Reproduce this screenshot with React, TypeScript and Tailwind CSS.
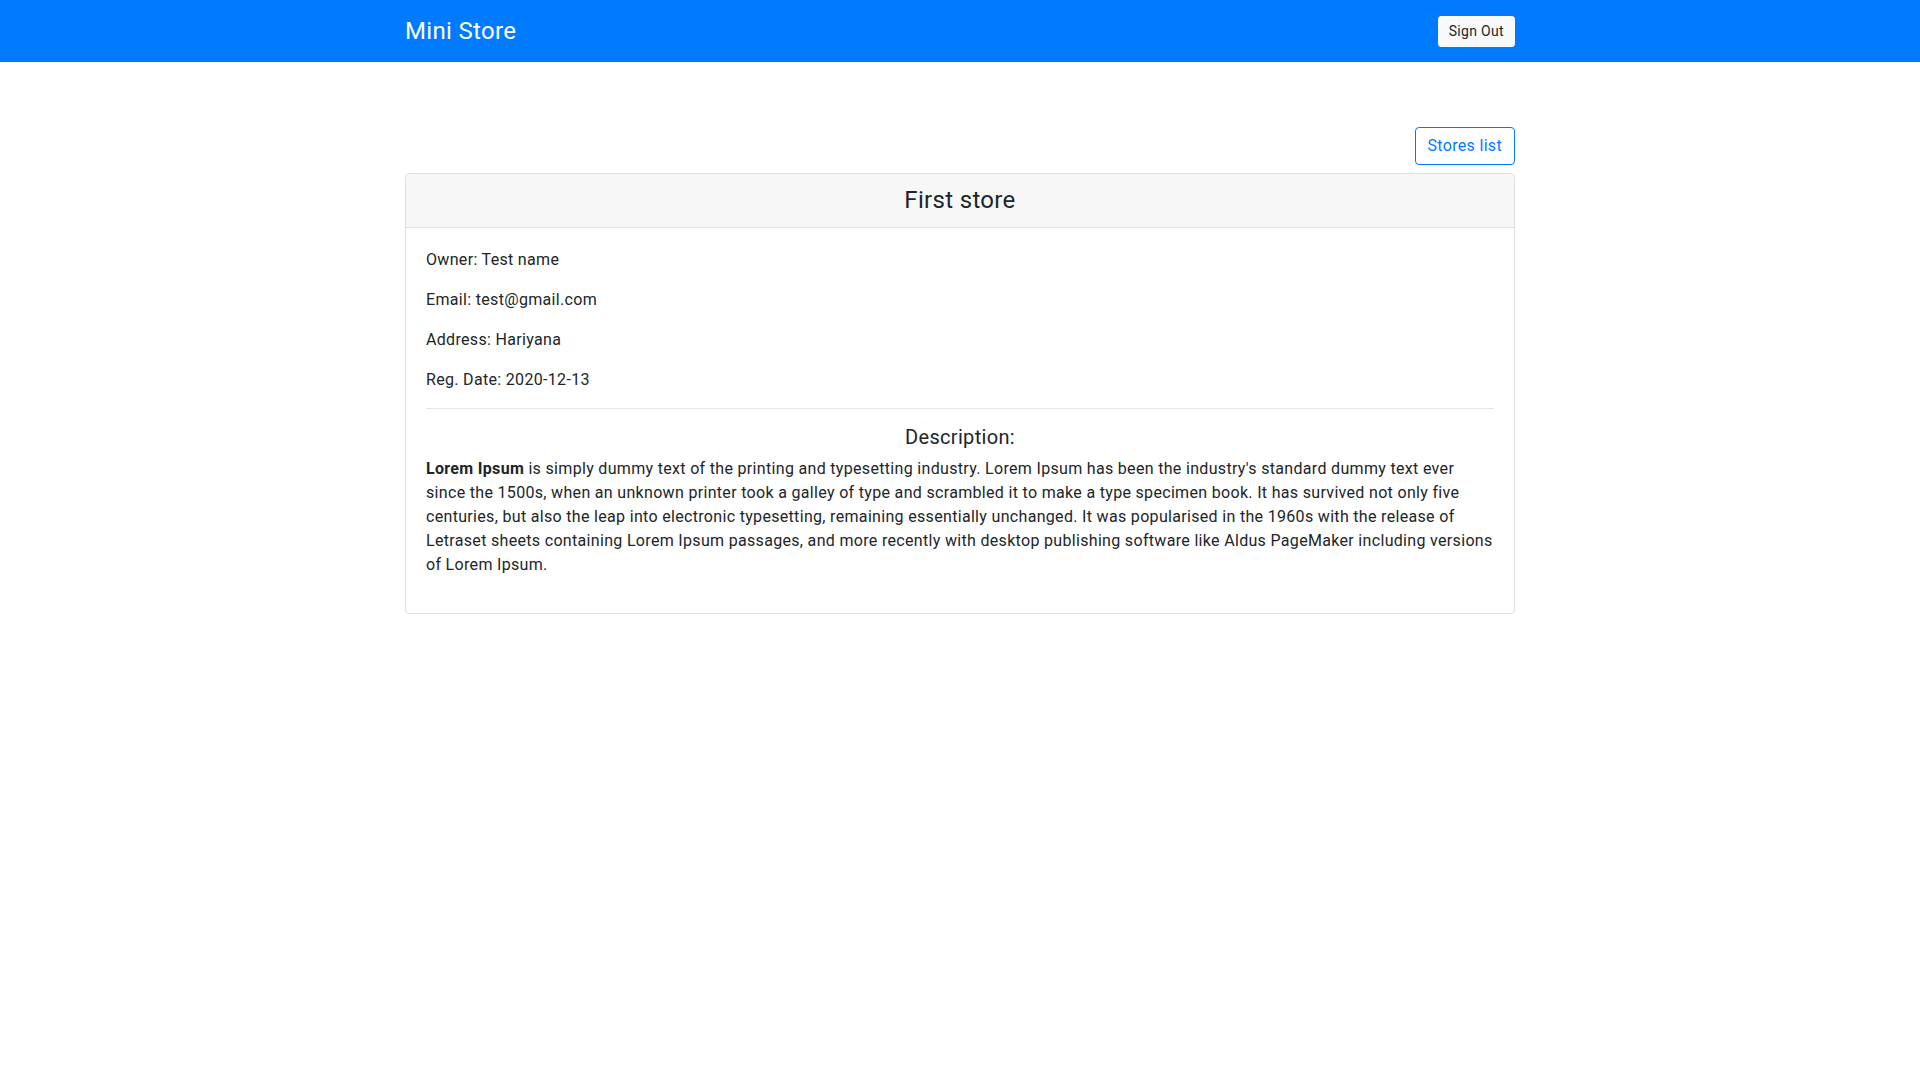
const description = (
  <>
    <b className="font-bold">Lorem Ipsum</b> is simply dummy text of the printing and typesetting industry. Lorem Ipsum
    has been the industry's standard dummy text ever
    <br />
    since the 1500s, when an unknown printer took a galley of type and scrambled it to make a type specimen book. It
    has survived not only five
    <br />
    centuries, but also the leap into electronic typesetting, remaining essentially unchanged. It was popularised in
    the 1960s with the release of
    <br />
    Letraset sheets containing Lorem Ipsum passages, and more recently with desktop publishing software like Aldus
    PageMaker including versions
    <br />
    of Lorem Ipsum.
  </>
);

const details = [
  ['Owner', 'Test name'],
  ['Email', 'test@gmail.com'],
  ['Address', 'Hariyana'],
  ['Reg. Date', '2020-12-13'],
];

export default function App() {
  return (
    <div className="min-h-screen bg-white text-[#212529] font-['Roboto',sans-serif] tracking-[0.02em] text-base leading-6">
      {/* Navbar */}
      <nav className="bg-[#007bff] py-2">
        <div className="mx-auto w-[1110px] flex items-center justify-between">
          <a className="text-white text-2xl leading-9 py-[5px]">Mini Store</a>
          <button className="bg-[#f8f9fa] text-[#212529] text-sm leading-[21px] px-[10px] py-1 rounded-[3px] border border-[#f8f9fa]">
            Sign Out
          </button>
        </div>
      </nav>

      <div className="mx-auto w-[1110px] pt-[65px]">
        <div className="flex justify-end mb-2">
          <button className="border border-[#007bff] text-[#007bff] rounded-[4px] px-3 py-[6px] leading-6">
            Stores list
          </button>
        </div>

        <div className="border border-[#dfdfdf] rounded-[4px]">
          <div className="bg-[#f7f7f7] border-b border-[#dfdfdf] px-5 py-3 text-center rounded-t-[4px]">
            <h4 className="text-2xl leading-[29px] font-normal">First store</h4>
          </div>
          <div className="p-5">
            {details.map(([k, v]) => (
              <p key={k} className="mb-4">
                {k}: {v}
              </p>
            ))}
            <hr className="border-t border-[#e5e5e5] my-4" />
            <h5 className="text-center text-xl leading-6 font-normal mb-2">Description:</h5>
            <p className="mb-4 whitespace-nowrap">{description}</p>
          </div>
        </div>
      </div>
    </div>
  );
}
